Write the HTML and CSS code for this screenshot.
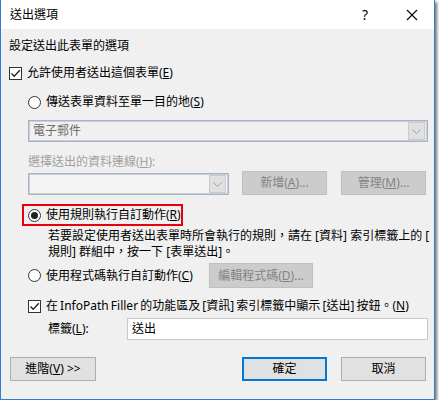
FILE: index.html
```html
<!DOCTYPE html>
<html>
<head>
<meta charset="utf-8">
<link rel="stylesheet" href="styles.css">
</head>
<body>
<div class="window">
  <div class="titlebar">
    <span class="title">送出選項</span>
    <span class="help">?</span>
    <span class="close"><svg width="12" height="12" viewBox="0 0 12 12"><path d="M1 1L11 11M11 1L1 11" stroke="#000" stroke-width="1.1" fill="none"/></svg></span>
  </div>
  <div class="content">
    <div class="row r1">設定送出此表單的選項</div>
    <div class="row r2"><span class="check"><svg width="11" height="11" viewBox="0 0 11 11"><path d="M1.5 5.5L4.2 8.3L9.8 2.2" stroke="#222" stroke-width="1.3" fill="none"/></svg></span><span class="lbl">允許使用者送出這個表單(<u>E</u>)</span></div>
    <div class="row r3 indent"><span class="radio"></span><span class="lbl">傳送表單資料至單一目的地(<u>S</u>)</span></div>
    <div class="combo wide disabled"><span class="combo-text">電子郵件</span><span class="drop"><svg width="9" height="5" viewBox="0 0 9 5"><path d="M0.5 0.5L4.5 4.5L8.5 0.5" stroke="#a0a0a0" fill="none"/></svg></span></div>
    <div class="row r5 indent grey">選擇送出的資料連線(<u>H</u>):</div>
    <div class="r6">
      <div class="combo small disabled"><span class="combo-text"></span><span class="drop"><svg width="9" height="5" viewBox="0 0 9 5"><path d="M0.5 0.5L4.5 4.5L8.5 0.5" stroke="#a0a0a0" fill="none"/></svg></span></div>
      <div class="btn dis b-new">新增(<u>A</u>)...</div>
      <div class="btn dis b-mng">管理(<u>M</u>)...</div>
    </div>
    <div class="r7"><div class="redbox"><span class="radio on"></span><span class="lbl">使用規則執行自訂動作(<u>R</u>)</span></div></div>
    <div class="desc">若要設定使用者送出表單時所會執行的規則，請在 [資料] 索引標籤上的 [<br>規則] 群組中，按一下 [表單送出]。</div>
    <div class="r9"><span class="radio"></span><span class="lbl code-lbl">使用程式碼執行自訂動作(<u>C</u>)</span><div class="btn dis b-code">編輯程式碼(<u>D</u>)...</div></div>
    <div class="row r10 indent"><span class="check"><svg width="11" height="11" viewBox="0 0 11 11"><path d="M1.5 5.5L4.2 8.3L9.8 2.2" stroke="#222" stroke-width="1.3" fill="none"/></svg></span><span class="lbl spaced">在 InfoPath Filler 的功能區及 [資訊] 索引標籤中顯示 [送出] 按鈕。(<u>N</u>)</span></div>
    <div class="r11"><span class="tag">標籤(<u>L</u>):</span><div class="input">送出</div></div>
    <div class="r12">
      <div class="btn b-adv">進階(<u>V</u>) &gt;&gt;</div>
      <div class="spacer"></div>
      <div class="btn focus b-ok">確定</div>
      <div class="btn b-cancel">取消</div>
    </div>
  </div>
</div>
</body>
</html>
```

FILE: styles.css
```css
html, body { margin: 0; padding: 0; background: #fff; }
body {
  font-family: "Noto Sans", "Noto Sans CJK TC", sans-serif;
  font-size: 12px;
  color: #000;
}
u { text-decoration: underline; text-underline-offset: 1px; }
.window {
  box-sizing: border-box;
  width: 435px;
  height: 400px;
  border: 1px solid #2f7fd0;
  border-top: none;
  background: #f0f0f0;
  box-shadow: 2px 2px 3px rgba(0,0,0,0.55);
  display: flex;
  flex-direction: column;
}
.titlebar {
  height: 29px;
  background: #fff;
  display: flex;
  align-items: center;
  flex-shrink: 0;
}
.title { margin-left: 9px; line-height: 16px; }
.help { margin-left: auto; width: 12px; text-align: center; line-height: 16px; font-size: 14px; }
.close { margin-left: 35px; margin-right: 16px; display: flex; }
.content {
  padding-left: 8px;
  display: flex;
  flex-direction: column;
}
.row {
  height: 18px;
  display: flex;
  align-items: center;
  line-height: 16px;
  white-space: nowrap;
}
.r1 { margin-top: 8px; }
.r2 { margin-top: 9px; }
.r3 { margin-top: 11px; }
.indent { padding-left: 19px; }
.grey { color: #a0a0a0; }
.check {
  box-sizing: border-box;
  width: 13px; height: 13px;
  border: 1px solid #333;
  background: #fff;
  display: flex; align-items: center; justify-content: center;
  flex-shrink: 0;
}
.lbl { margin-left: 5px; }
.spaced { word-spacing: -1px; }
.code-lbl { width: 163px; flex-shrink: 0; }
.radio {
  box-sizing: border-box;
  width: 13px; height: 13px;
  border: 1px solid #333;
  border-radius: 50%;
  background: #fff;
  display: flex; align-items: center; justify-content: center;
  flex-shrink: 0;
}
.radio.on::after {
  content: "";
  width: 7px; height: 7px;
  border-radius: 50%;
  background: #222;
}
.combo {
  box-sizing: border-box;
  height: 22px;
  border: 1px solid #a7b3c5;
  box-shadow: inset 0 0 0 1px #c7cfdb;
  background: #f0f0f0;
  display: flex;
  align-items: center;
}
.combo.wide { margin-top: 9px; margin-left: 19px; width: 400px; }
.combo-text { flex: 1; padding-left: 4px; color: #6d6d6d; line-height: 16px; }
.drop {
  box-sizing: border-box;
  width: 17px; height: 18px;
  margin-right: 2px;
  background: #e0e0e0;
  border: 1px solid #cacaca;
  display: flex; align-items: center; justify-content: center;
}
.r5 { margin-top: 11px; }
.r6 {
  margin-top: 0;
  height: 24px;
  display: flex;
  align-items: flex-end;
  padding-left: 19px;
}
.combo.small { width: 201px; background: #f4f4f4; }
.btn {
  box-sizing: border-box;
  height: 24px;
  width: 85px;
  border: 1px solid #adadad;
  background: #e1e1e1;
  display: flex;
  align-items: center;
  justify-content: center;
  line-height: 16px;
  white-space: nowrap;
}
.btn.dis { background: #cccccc; border-color: #bfbfbf; color: #838383; }
.b-new { margin-left: 13px; }
.b-mng { margin-left: 14px; }
.r7 { margin-top: 9px; padding-left: 13px; display: flex; }
.redbox {
  box-sizing: border-box;
  height: 22px;
  width: 161px;
  border: 2px solid #e8000b;
  display: flex;
  align-items: center;
  padding-left: 4px;
  white-space: nowrap;
  line-height: 16px;
}
.desc {
  margin-top: 2px;
  padding-left: 39px;
  line-height: 16px;
  white-space: nowrap;
}
.r9 {
  margin-top: 3px;
  height: 25px;
  display: flex;
  align-items: center;
  padding-left: 19px;
  white-space: nowrap;
  line-height: 16px;
}
.b-code { width: 104px; height: 25px; }
.r10 { margin-top: 9px; }
.r11 {
  margin-top: 3px;
  height: 22px;
  display: flex;
  align-items: center;
  padding-left: 39px;
}
.tag { width: 79px; line-height: 16px; }
.input {
  box-sizing: border-box;
  width: 301px;
  height: 22px;
  border: 1px solid #c8c8c8;
  background: #fff;
  display: flex;
  align-items: center;
  padding-left: 4px;
  line-height: 16px;
}
.r12 {
  margin-top: 17px;
  display: flex;
  padding-left: 1px;
}
.b-adv { width: 86px; }
.spacer { width: 146px; }
.btn.focus { border: 2px solid #0078d7; }
.b-cancel { margin-left: 14px; }
```
